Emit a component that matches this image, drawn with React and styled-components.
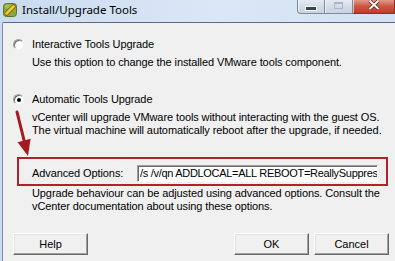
import React from "react";
import styled, { createGlobalStyle } from "styled-components";

const Global = createGlobalStyle`
  html, body { margin: 0; padding: 0; overflow: hidden; background: #d6e4f4; }
  * { box-sizing: border-box; }
`;

const Window = styled.div`
  width: 395px;
  height: 261px;
  display: flex;
  flex-direction: column;
  background: linear-gradient(to right, #c9dbf0, #dbe7f6 55%, #d2e1f3);
  font-family: "Liberation Sans", Arial, sans-serif;
  font-size: 11px;
  letter-spacing: -0.1px;
  color: #000;
`;

const TitleBar = styled.div`
  height: 22px;
  flex: none;
  display: flex;
  align-items: flex-start;
  padding: 3px 0 0 3px;
  gap: 5px;
`;

const TitleText = styled.div`
  font-family: "Noto Sans", "Open Sans", sans-serif;
  font-size: 11.5px;
  letter-spacing: 0;
  line-height: 14px;
  color: #000;
  flex: 1;
`;

const Controls = styled.div`
  display: flex;
  margin-top: -3px;
  height: 14px;
`;

const CapButton = styled.div`
  width: ${(p) => p.$w}px;
  height: 14px;
  display: flex;
  align-items: center;
  justify-content: center;
  border: 1px solid ${(p) => (p.$close ? "#8d2f24" : "#7d8a9c")};
  border-top: none;
  border-left-width: ${(p) => (p.$first ? 1 : 0)}px;
  border-bottom-left-radius: ${(p) => (p.$first ? 4 : 0)}px;
  background: ${(p) =>
    p.$close
      ? "linear-gradient(#e29a8c, #cf5a48 45%, #c0392a)"
      : "linear-gradient(#e4eaf2, #d3dce8 50%, #c8d3e2)"};
  box-shadow: inset 1px 0 rgba(255, 255, 255, 0.6);
`;

const MinGlyph = styled.div`
  width: 10px;
  height: 3px;
  margin-top: 3px;
  background: #3a4250;
  border: 1px solid #f4f6f9;
  box-sizing: content-box;
`;

const MaxGlyph = styled.div`
  width: 9px;
  height: 7px;
  margin-top: -2px;
  border: 1px solid #aeb6c2;
  border-top-width: 2px;
`;

const Client = styled.div`
  flex: 1;
  position: relative;
  margin-left: 2px;
  border-left: 1px solid #7f8ea3;
  border-top: 1px solid #5c6b80;
  border-top-left-radius: 2px;
  background: #f0f0f0;
  padding: 15px 6px 0 10px;
  display: flex;
  flex-direction: column;
`;

const OptionRow = styled.div`
  display: flex;
  align-items: center;
  gap: 8px;
  height: 13px;
  line-height: 13px;
  margin-top: ${(p) => p.$gap || 0}px;
`;

const Radio = styled.span`
  width: 11px;
  height: 11px;
  border-radius: 50%;
  flex: none;
  background: #fff;
  border: 1px solid;
  border-color: #a0a0a0 #f4f4f4 #f4f4f4 #a0a0a0;
  box-shadow: inset 1px 1px 0 #6a6a6a;
  display: flex;
  align-items: center;
  justify-content: center;
  &::after {
    content: "";
    width: 4px;
    height: 4px;
    border-radius: 50%;
    margin: 1px 0 0 1px;
    background: ${(p) => (p.$checked ? "#000" : "transparent")};
  }
`;

const Desc = styled.div`
  margin-left: 19px;
  margin-top: ${(p) => p.$gap || 0}px;
  line-height: 13px;
  white-space: nowrap;
`;

const AdvancedBox = styled.div`
  margin: 20px 0 0 4px;
  width: 371px;
  height: 29px;
  border: 2px solid #b1232b;
  display: flex;
  align-items: center;
  padding: 3px 0 0 13px;
`;

const FieldLabel = styled.span`
  width: 105px;
  flex: none;
  line-height: 13px;
`;

const TextField = styled.input`
  width: 241px;
  height: 17px;
  padding: 0 0 0 2px;
  margin: 0;
  font: inherit;
  font-size: 11px;
  letter-spacing: -0.3px;
  color: #000;
  background: #fff;
  border: 1px solid;
  border-color: #a0a0a0 #fff #fff #a0a0a0;
  box-shadow: inset 1px 1px 0 #696969;
  outline: none;
`;

const ButtonRow = styled.div`
  display: flex;
  gap: 5px;
  margin-top: 20px;
`;

const Spacer = styled.div`
  flex: 1;
`;

const Button = styled.button`
  width: 75px;
  height: 22px;
  padding: 0;
  font: inherit;
  font-size: 11px;
  color: #000;
  background: #f0f0f0;
  border: 1px solid;
  border-color: #fff #696969 #696969 #fff;
  box-shadow: inset -1px -1px 0 #a0a0a0, inset 1px 1px 0 #e3e3e3;
`;

const Arrow = styled.svg`
  position: absolute;
  left: 7px;
  top: 85px;
  width: 30px;
  height: 52px;
  overflow: visible;
`;

function AppIcon() {
  return (
    <svg width="14" height="14" viewBox="0 0 14 14">
      <rect x="0.5" y="0.5" width="13" height="13" rx="3" fill="#8fa83c" stroke="#5e7422" />
      <rect x="2" y="1.5" width="10" height="4" rx="2" fill="#b4c96a" opacity="0.6" />
      <path d="M3.5 10.5 L10.5 3.5" stroke="#7a5a12" strokeWidth="4.5" strokeLinecap="round" />
      <path d="M3.5 10.5 L10.5 3.5" stroke="#f4cc2e" strokeWidth="2.8" strokeLinecap="round" />
    </svg>
  );
}

export default function App() {
  return (
    <>
      <Global />
      <Window>
        <TitleBar>
          <AppIcon />
          <TitleText>Install/Upgrade Tools</TitleText>
          <Controls>
            <CapButton $w={28} $first>
              <MinGlyph />
            </CapButton>
            <CapButton $w={28}>
              <MaxGlyph />
            </CapButton>
            <CapButton $w={42} $close>
              <svg width="12" height="10" viewBox="0 0 12 10" style={{ marginTop: -4 }}>
                <path d="M1.5 0.5 L10.5 9 M10.5 0.5 L1.5 9" stroke="#5a1a12" strokeWidth="3.4" />
                <path d="M1.5 0.5 L10.5 9 M10.5 0.5 L1.5 9" stroke="#fff" strokeWidth="2" />
              </svg>
            </CapButton>
          </Controls>
        </TitleBar>
        <Client>
          <OptionRow>
            <Radio />
            <span>Interactive Tools Upgrade</span>
          </OptionRow>
          <Desc $gap={5}>Use this option to change the installed VMware tools component.</Desc>

          <OptionRow $gap={24}>
            <Radio $checked />
            <span>Automatic Tools Upgrade</span>
          </OptionRow>
          <Desc $gap={5}>vCenter will upgrade VMware tools without interacting with the guest OS.</Desc>
          <Desc>The virtual machine will automatically reboot after the upgrade, if needed.</Desc>

          <AdvancedBox>
            <FieldLabel>Advanced Options:</FieldLabel>
            <TextField readOnly value="/s /v/qn ADDLOCAL=ALL REBOOT=ReallySuppress" />
          </AdvancedBox>

          <Desc $gap={1}>Upgrade behaviour can be adjusted using advanced options. Consult the</Desc>
          <Desc>vCenter documentation about using these options.</Desc>

          <ButtonRow>
            <Button>Help</Button>
            <Spacer />
            <Button>OK</Button>
            <Button>Cancel</Button>
          </ButtonRow>

          <Arrow viewBox="0 0 30 52">
            <path d="M7 4 L14.1 32.5" stroke="#a5191f" strokeWidth="3" strokeLinecap="round" />
            <path d="M18 48 L20.6 30.8 L7.6 34.2 Z" fill="#a5191f" />
          </Arrow>
        </Client>
      </Window>
    </>
  );
}
